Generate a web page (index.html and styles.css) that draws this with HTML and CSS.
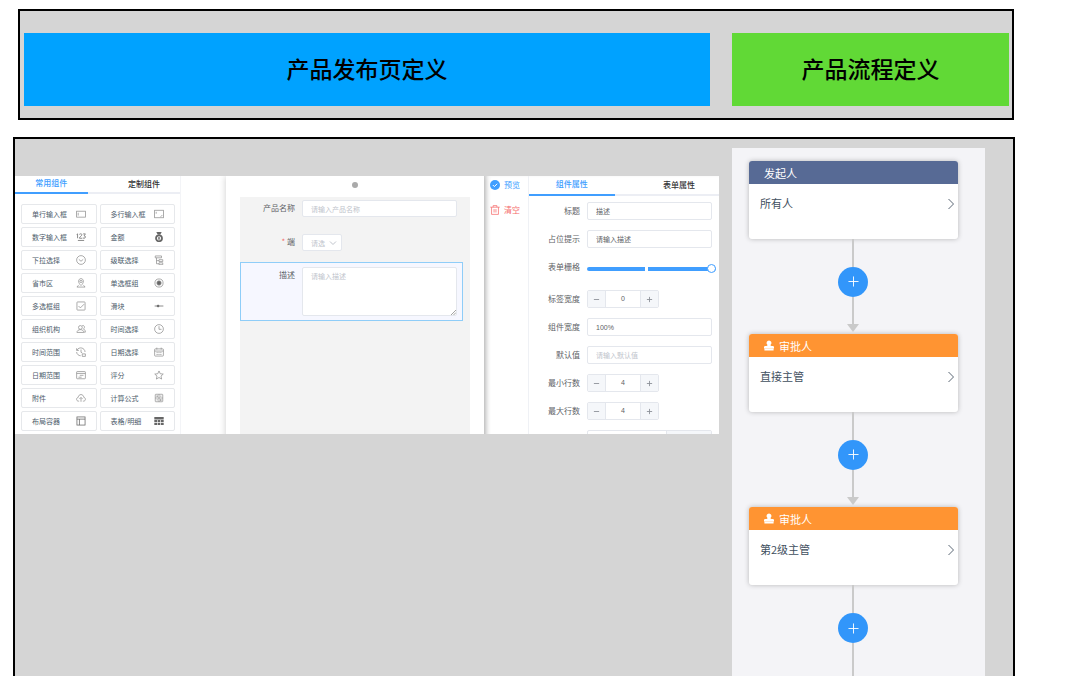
FILE: index.html
```html
<!DOCTYPE html>
<html lang="zh-CN">
<head>
<meta charset="utf-8">
<meta name="viewport" content="width=device-width, initial-scale=1">
<title>产品定义</title>
<link rel="stylesheet" href="styles.css">
</head>
<body>
<header class="banner">
  <h1 class="banner-title banner-publish">产品发布页定义</h1>
  <h1 class="banner-title banner-process">产品流程定义</h1>
</header>
<main class="board">
  <div class="designer">
    <section class="palette">
      <div class="palette-main">
        <div class="tabs palette-tabs" role="tablist">
          <button class="tab active" role="tab" aria-selected="true">常用组件</button>
          <button class="tab" role="tab" aria-selected="false">定制组件</button>
        </div>
        <div class="items">
          <button class="item">单行输入框<svg class="icon" viewBox="0 0 16 16"><rect x="1" y="3.500" width="14" height="9.500"/><path d="M3.500 6v4.500"/></svg></button>
          <button class="item">多行输入框<svg class="icon" viewBox="0 0 16 16"><rect x="1" y="2" width="14" height="12"/><path d="M3.500 4.500v3M10.500 12.500l3-3"/></svg></button>
          <button class="item">数字输入框<svg class="icon dark" viewBox="0 0 16 16"><path d="M1 4l1.500-1v7M5.500 4c0-1.500 4-1.500 4 .5 0 1.500-4 3-4 5.500h4.500M11.500 3h3.500l-2 3c3 0 2.500 4 0 4l-2-.5M3 13.500h10"/></svg></button>
          <button class="item">金额<svg class="icon dark" viewBox="0 0 16 16"><path class="solid" d="M4.500 0h7L10 3.500H6z"/><circle cx="8" cy="10" r="4.800" stroke-width="2.800"/><path d="M6.200 7.500L8 9.500l1.800-2M8 9.500v3.500M6.200 10.800h3.600"/></svg></button>
          <button class="item">下拉选择<svg class="icon" viewBox="0 0 16 16"><circle cx="8" cy="8" r="7"/><path d="M4.500 7L8 10l3.500-3"/></svg></button>
          <button class="item">级联选择<svg class="icon" viewBox="0 0 16 16"><path d="M2 1.500h10v3H2zM4 4.500V14h4M4 9h4M8 7.500h6v3H8zM8 12.500h6v3H8z"/></svg></button>
          <button class="item">省市区<svg class="icon" viewBox="0 0 16 16"><path d="M8 12C2.500 7.500 3.500 1 8 1s5.500 6.500 0 11zM4 11.500l-2.500 3h13l-2.500-3"/><circle cx="8" cy="5.500" r="1.800"/></svg></button>
          <button class="item">单选框组<svg class="icon" viewBox="0 0 16 16"><circle cx="8" cy="8" r="6.500"/><circle class="solid" cx="8" cy="8" r="3.500"/></svg></button>
          <button class="item">多选框组<svg class="icon" viewBox="0 0 16 16"><rect x="1.500" y="1.500" width="13" height="13" rx="1"/><path d="M4 8l3 3 6-6"/></svg></button>
          <button class="item">滑块<svg class="icon dark" viewBox="0 0 16 16"><path d="M1 8h14"/><circle class="solid" cx="6.500" cy="8" r="1.500"/></svg></button>
          <button class="item">组织机构<svg class="icon" viewBox="0 0 16 16"><circle cx="7" cy="5.500" r="3"/><path d="M1.500 13.500c0-6 11-6 11 0zM10 2.500c4-1 4.500 4 2 5.500 2 .5 3 3 3 5h-2"/></svg></button>
          <button class="item">时间选择<svg class="icon" viewBox="0 0 16 16"><circle cx="8" cy="8" r="7"/><path d="M8 3.500V8.500h4"/></svg></button>
          <button class="item">时间范围<svg class="icon" viewBox="0 0 16 16"><path d="M1 2v3.500h3.500M1.500 5C5-1 14 1 14.500 8M1 8c0 3 3 6 6.500 6M8 4v4.500l2 1M10 11h5v4h-5z"/></svg></button>
          <button class="item">日期选择<svg class="icon" viewBox="0 0 16 16"><rect x="1" y="3" width="14" height="11.500" rx="1"/><path d="M1 6.500h14M4.500 1v3M11.500 1v3M4 9h2M7 9h2M10 9h2M4 12h2M7 12h2M10 12h2"/></svg></button>
          <button class="item">日期范围<svg class="icon" viewBox="0 0 16 16"><rect x="1" y="2.500" width="14" height="11.500" rx="1"/><path d="M1 5.500h14M6 8.500h6M4 11.500h5"/></svg></button>
          <button class="item">评分<svg class="icon" viewBox="0 0 16 16"><path d="M8 1.500l2 4.500 4.800.5-3.600 3.200 1 4.800L8 12l-4.200 2.500 1-4.800L1.200 6.500 6 6z"/></svg></button>
          <button class="item">附件<svg class="icon" viewBox="0 0 16 16"><path d="M5 13H4c-4 0-4-5.500-.5-6C4 1 12 1 12.500 7c3.500.5 3.500 6-.5 6h-1M8 14V7.500M5.500 9.500L8 7l2.500 2.500"/></svg></button>
          <button class="item">计算公式<svg class="icon" viewBox="0 0 16 16"><rect x="2" y="2" width="12" height="12" rx="1"/><path d="M8 2v12M2 8h12M4 5h2.500M9.500 5H12M5 4v2.500M4 11h2.500M9.500 10.500H12M9.500 12H12"/></svg></button>
          <button class="item">布局容器<svg class="icon dark" viewBox="0 0 16 16"><rect x="1.500" y="1.500" width="13" height="13"/><path d="M1.500 5h13M5.500 5v9.500"/></svg></button>
          <button class="item">表格/明细<svg class="icon dark" viewBox="0 0 16 16"><path class="solid flat" d="M.5 1.500h15v4H.5zM.5 6.500h4.300v3.500H.5zM5.800 6.500h4.300V10H5.800zM11.200 6.500h4.300V10h-4.300zM.5 11h4.300v3.500H.5zM5.800 11h4.300v3.500H5.800zM11.200 11h4.300v3.500h-4.300z"/></svg></button>
        </div>
      </div>
    </section>

    <section class="stage">
      <div class="stage-head"><span class="dot"></span></div>
      <form class="canvas">
        <div class="field">
          <label class="label" for="name">产品名称</label>
          <input class="control" id="name" type="text" placeholder="请输入产品名称">
        </div>
        <div class="field">
          <label class="label" for="side"><span class="required">*</span> 端</label>
          <span class="select-wrap">
            <select class="control select" id="side"><option>请选</option></select>
            <svg class="caret" viewBox="0 0 8 8"><path d="M1 2.500l3 3 3-3"/></svg>
          </span>
        </div>
        <div class="field selected">
          <label class="label" for="desc">描述</label>
          <span class="area-wrap">
            <textarea class="control area" id="desc" placeholder="请输入描述"></textarea>
            <svg class="grip" viewBox="0 0 6 6"><path d="M0 6l6-6M3 6l3-3"/></svg>
          </span>
        </div>
      </form>
    </section>

    <section class="inspector">
      <div class="actions">
        <button class="action preview"><svg class="action-icon" viewBox="0 0 16 16"><circle cx="8" cy="8" r="8" fill="currentColor"/><path d="M4.500 8l2.500 2.500 4.500-4.500" fill="none" stroke="#fff" stroke-width="1.600"/></svg>预览</button>
        <button class="action clear"><svg class="action-icon" viewBox="0 0 16 16"><path d="M.5 3.500h15M5 3.500V1h6v2.500M2.500 3.500V15h11V3.500M6.500 6.500v5.500M9.500 6.500v5.500" fill="none" stroke="currentColor" stroke-width="1.200"/></svg>清空</button>
      </div>
      <div class="props">
        <div class="tabs props-tabs" role="tablist">
          <button class="tab active" role="tab" aria-selected="true">组件属性</button>
          <button class="tab" role="tab" aria-selected="false">表单属性</button>
        </div>
        <form class="prop-list">
          <div class="prop"><label class="label" for="p-title">标题</label><input class="control" id="p-title" type="text" value="描述"></div>
          <div class="prop"><label class="label" for="p-hint">占位提示</label><input class="control" id="p-hint" type="text" value="请输入描述"></div>
          <div class="prop prop-slider"><label class="label" for="p-grid">表单栅格</label><input class="slider" id="p-grid" type="range" min="0" max="24" value="24"></div>
          <div class="prop"><label class="label" for="p-label">标签宽度</label><span class="stepper"><button type="button" aria-label="减少"><svg viewBox="0 0 8 8"><path d="M1 4h6"/></svg></button><input id="p-label" type="text" value="0"><button type="button" aria-label="增加"><svg viewBox="0 0 8 8"><path d="M1 4h6M4 1v6"/></svg></button></span></div>
          <div class="prop"><label class="label" for="p-width">组件宽度</label><input class="control" id="p-width" type="text" value="100%"></div>
          <div class="prop"><label class="label" for="p-default">默认值</label><input class="control" id="p-default" type="text" placeholder="请输入默认值"></div>
          <div class="prop"><label class="label" for="p-min">最小行数</label><span class="stepper"><button type="button" aria-label="减少"><svg viewBox="0 0 8 8"><path d="M1 4h6"/></svg></button><input id="p-min" type="text" value="4"><button type="button" aria-label="增加"><svg viewBox="0 0 8 8"><path d="M1 4h6M4 1v6"/></svg></button></span></div>
          <div class="prop"><label class="label" for="p-max">最大行数</label><span class="stepper"><button type="button" aria-label="减少"><svg viewBox="0 0 8 8"><path d="M1 4h6"/></svg></button><input id="p-max" type="text" value="4"><button type="button" aria-label="增加"><svg viewBox="0 0 8 8"><path d="M1 4h6M4 1v6"/></svg></button></span></div>
          <div class="prop"><span class="label"></span><span class="group"><input type="text"><span class="group-end"></span></span></div>
        </form>
      </div>
    </section>
  </div>

  <section class="flow">
    <article class="node">
      <h2 class="node-head starter">发起人</h2>
      <div class="node-body">所有人<svg class="chevron" viewBox="0 0 6 12"><path d="M.5 1l5 5-5 5"/></svg></div>
    </article>
    <div class="link"><span class="line"></span><button class="add" aria-label="添加节点"><svg viewBox="0 0 12 12"><path d="M6 .5v11M.5 6h11"/></svg></button><span class="line"></span><span class="arrow"></span></div>
    <article class="node">
      <h2 class="node-head approver"><svg class="stamp" viewBox="0 0 12 12"><path d="M6 0a3 3 0 0 1 2 5.200C7.500 6 8 6.500 9 6.500h1.500q1.500 0 1.500 1.500v1.500H0V8q0-1.500 1.500-1.500H3c1 0 1.500-.5 1-1.300A3 3 0 0 1 6 0zM.5 10h11v2H.5z"/></svg>审批人</h2>
      <div class="node-body">直接主管<svg class="chevron" viewBox="0 0 6 12"><path d="M.5 1l5 5-5 5"/></svg></div>
    </article>
    <div class="link"><span class="line"></span><button class="add" aria-label="添加节点"><svg viewBox="0 0 12 12"><path d="M6 .5v11M.5 6h11"/></svg></button><span class="line"></span><span class="arrow"></span></div>
    <article class="node">
      <h2 class="node-head approver"><svg class="stamp" viewBox="0 0 12 12"><path d="M6 0a3 3 0 0 1 2 5.200C7.500 6 8 6.500 9 6.500h1.500q1.500 0 1.500 1.500v1.500H0V8q0-1.500 1.500-1.500H3c1 0 1.500-.5 1-1.300A3 3 0 0 1 6 0zM.5 10h11v2H.5z"/></svg>审批人</h2>
      <div class="node-body">第2级主管<svg class="chevron" viewBox="0 0 6 12"><path d="M.5 1l5 5-5 5"/></svg></div>
    </article>
    <div class="link"><span class="line"></span><button class="add" aria-label="添加节点"><svg viewBox="0 0 12 12"><path d="M6 .5v11M.5 6h11"/></svg></button><span class="line"></span><span class="arrow"></span></div>
  </section>
</main>
</body>
</html>
```

FILE: styles.css
```css
* { box-sizing: border-box; }

body {
  display: flex;
  flex-direction: column;
  gap: 17px;
  height: 100vh;
  margin: 0;
  padding: 9px 65px 0 13px;
  overflow: hidden;
  background: #fff;
  color: #606266;
  font: 8px/12px "Noto Sans CJK SC", sans-serif;
}

button, input, select, textarea {
  margin: 0;
  padding: 0;
  border: 0;
  border-radius: 0;
  outline: 0;
  background: none;
  color: inherit;
  font: inherit;
}

.banner {
  display: grid;
  grid-template-columns: 686fr 277fr;
  gap: 22px;
  margin: 0 1px 0 5px;
  padding: 22px 3px 12px 4px;
  border: 2px solid #000;
  background: #d5d5d5;
}

.banner-title {
  margin: 0;
  padding: 19px 0 21px;
  color: #000;
  font-size: 23px;
  font-weight: 500;
  line-height: 33px;
  text-align: center;
}

.banner-publish { background: #00a2ff; }
.banner-process { background: #61d936; }

.board {
  display: grid;
  flex: 1;
  grid-template-columns: minmax(0, 704fr) minmax(0, 253fr);
  gap: 13px;
  align-items: start;
  min-height: 0;
  padding: 9px 28px 0 0;
  overflow: hidden;
  border: 2px solid #000;
  border-bottom: 0;
  background: #d5d5d5;
}

.designer {
  display: grid;
  grid-template-columns: 211fr 258fr 235fr;
  height: 258px;
  margin-top: 28px;
  overflow: hidden;
  background: #fff;
}

.palette { padding-right: 45px; }
.palette-main { height: 100%; border-right: 1px solid #f3f4f7; }

.tabs { display: flex; border-bottom: 2px solid #eceef4; }

.tab {
  flex: 1;
  margin-bottom: -2px;
  color: #303133;
  font-weight: 500;
  text-align: right;
}

.tab.active {
  flex: 0 0 44%;
  border-bottom: 2px solid #409eff;
  color: #409eff;
  text-align: center;
}

.palette-tabs .tab { padding: 1px 20px 3px 0; }
.palette-tabs .tab.active { padding-right: 0; }
.props-tabs .tab { padding: 2px 24px 4px 0; }
.props-tabs .tab.active { flex-basis: 45%; padding-right: 0; }

.items {
  display: grid;
  grid-template-columns: 1fr 1fr;
  gap: 3px;
  padding: 10px 5px 0 6px;
}

.item {
  display: flex;
  align-items: center;
  justify-content: space-between;
  height: 20px;
  padding: 0 10px;
  border: 1px solid #e6e8eb;
  border-radius: 2px;
  color: #4d5c6b;
  font-size: 7px;
  white-space: nowrap;
}

.icon {
  width: 10px;
  height: 10px;
  fill: none;
  stroke: #909090;
  stroke-width: 1.2;
}

.icon.dark { stroke: #666; }
.solid { fill: #666; }
.flat { stroke: none; }

.stage {
  padding: 0 14px;
  box-shadow: 0 0 7px rgba(0, 0, 0, .2);
}

.stage-head { display: flex; justify-content: center; padding: 6px 0 9px; }
.dot { width: 6px; height: 6px; border-radius: 50%; background: #aaa; }

.canvas {
  display: flex;
  flex-direction: column;
  height: 100%;
  padding: 3px 7px 0 0;
  background: #f3f3f3;
}

.field {
  display: flex;
  gap: 7px;
  margin-bottom: 17px;
  padding: 0 6px 0 0;
}

.field:nth-child(2) { margin-bottom: 11px; }
.field > .label { flex: 0 0 55px; padding-top: 2px; }
.label { text-align: right; white-space: nowrap; }
.required { color: #f56c6c; }

.field.selected {
  padding: 4px 5px 4px 0;
  border: 1px solid #8fcdf8;
  background: #f6f7ff;
}

.field.selected > .label { flex-basis: 54px; }

.control {
  flex: 1;
  width: 100%;
  min-width: 0;
  height: 17px;
  padding: 0 8px;
  border: 1px solid #e4e7ed;
  border-radius: 2px;
  background: #fff;
  font-size: 7px;
}

.control::placeholder { color: #c0c4cc; }

.select-wrap { position: relative; width: 40px; }
.select { display: block; appearance: none; color: #c0c4cc; }

.caret {
  position: absolute;
  top: 5px;
  right: 5px;
  width: 8px;
  height: 8px;
  fill: none;
  stroke: #c0c4cc;
}

.area-wrap { position: relative; flex: 1; }
.area { display: block; height: 49px; padding-top: 2px; resize: none; }

.grip {
  position: absolute;
  right: 1px;
  bottom: 1px;
  width: 5px;
  height: 5px;
  fill: none;
  stroke: #909090;
}

.inspector {
  display: grid;
  grid-template-columns: 44px 1fr;
  box-shadow: inset 5px 0 5px -3px rgba(0, 0, 0, .2);
}

.actions {
  display: flex;
  flex-direction: column;
  align-items: flex-start;
  gap: 13px;
  padding: 3px 0 0 6px;
}

.action { display: flex; gap: 4px; align-items: center; white-space: nowrap; }
.action-icon { width: 10px; height: 10px; }
.preview { color: #409eff; }
.clear { color: #f56c6c; }

.props { min-width: 0; border-left: 1px solid #eff1f5; }

.prop-list {
  display: flex;
  flex-direction: column;
  gap: 10px;
  padding: 6px 7px 0 0;
}

.prop { display: flex; gap: 7px; height: 18px; }
.prop > .label { flex: 0 0 51px; line-height: 17px; }
.prop .control { height: 18px; font-family: "Liberation Sans", "Noto Sans CJK SC", sans-serif; }
.prop-slider { height: 22px; }

.slider {
  flex: 1;
  min-width: 0;
  height: 22px;
  margin-right: -4px;
  appearance: none;
}

.slider::-webkit-slider-runnable-track {
  height: 4px;
  border-radius: 2px;
  background: linear-gradient(90deg, #409eff 45%, #fff 45%, #fff 47%, #409eff 47%);
}

.slider::-webkit-slider-thumb {
  width: 9px;
  height: 9px;
  margin-top: -3px;
  appearance: none;
  border: 1px solid #409eff;
  border-radius: 50%;
  background: #fff;
}

.stepper {
  display: grid;
  grid-template-columns: 17px 36px 17px;
  overflow: hidden;
  border: 1px solid #e4e7ed;
  border-radius: 2px;
}

.stepper button { display: grid; place-items: center; background: #f5f7fa; }
.stepper svg { width: 7px; height: 7px; fill: none; stroke: #8c9097; }

.stepper input {
  width: 100%;
  border: solid #e4e7ed;
  border-width: 0 1px;
  font-family: "Liberation Sans", sans-serif;
  font-size: 7px;
  text-align: center;
}

.group {
  display: grid;
  flex: 1;
  grid-template-columns: 80fr 45fr;
  border: 1px solid #e4e7ed;
  border-radius: 2px;
}

.group input { width: 100%; border-right: 1px solid #e4e7ed; }
.group-end { background: #f5f7fa; }

.flow {
  padding: 13px 27px 40px 17px;
  background: #f4f4f7;
}

.node {
  overflow: hidden;
  border-radius: 3px;
  background: #fff;
  box-shadow: 0 0 5px rgba(0, 0, 0, .25);
}

.node-head {
  display: flex;
  gap: 5px;
  align-items: center;
  height: 23px;
  margin: 0;
  padding: 0 15px;
  color: #fff;
  font-size: 11px;
  font-weight: 400;
}

.starter { background: #576a95; }
.approver { background: #ff9432; }
.stamp { width: 10px; height: 11px; fill: #fff; }

.node-body {
  display: flex;
  justify-content: space-between;
  height: 55px;
  padding: 11px 4px 0 11px;
  color: #3f4f5e;
  font-size: 11px;
  line-height: 16px;
}

.chevron {
  width: 6px;
  height: 12px;
  margin-top: 3px;
  fill: none;
  stroke: #5a6774;
}

.link {
  display: flex;
  flex-direction: column;
  align-items: center;
  height: 95px;
  padding: 0 1px 2px 0;
}

.line { flex: 1; width: 2px; background: #cacaca; }

.add {
  display: grid;
  place-items: center;
  width: 30px;
  height: 30px;
  border-radius: 50%;
  background: #3296fa;
}

.add svg { width: 11px; height: 11px; fill: none; stroke: #fff; }

.arrow {
  border: solid transparent;
  border-width: 8px 6px 0;
  border-top-color: #cacaca;
}

.link:last-child { height: 130px; }
.link:last-child .line:first-child { flex: 0 0 28px; }
```
